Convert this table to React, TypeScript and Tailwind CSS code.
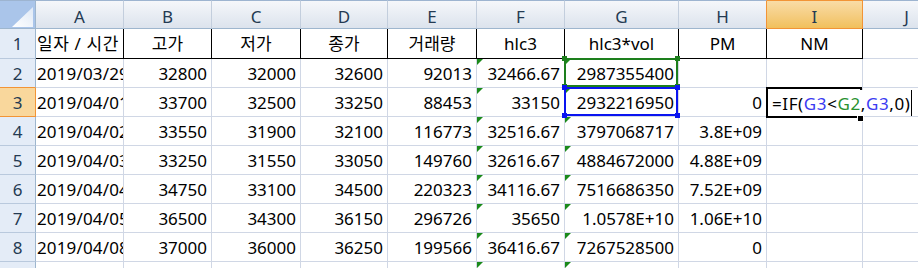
import React from "react";

const cols = ["A", "B", "C", "D", "E", "F", "G", "H", "I", "J"];

const titles = ["일자 / 시간", "고가", "저가", "종가", "거래량", "hlc3", "hlc3*vol", "PM", "NM", ""];

const rows = [
  ["2019/03/29", "32800", "32000", "32600", "92013", "32466.67", "2987355400", "", "", ""],
  ["2019/04/01", "33700", "32500", "33250", "88453", "33150", "2932216950", "0", "", ""],
  ["2019/04/02", "33550", "31900", "32100", "116773", "32516.67", "3797068717", "3.8E+09", "", ""],
  ["2019/04/03", "33250", "31550", "33050", "149760", "32616.67", "4884672000", "4.88E+09", "", ""],
  ["2019/04/04", "34750", "33100", "34500", "220323", "34116.67", "7516686350", "7.52E+09", "", ""],
  ["2019/04/05", "36500", "34300", "36150", "296726", "35650", "1.0578E+10", "1.06E+10", "", ""],
  ["2019/04/08", "37000", "36000", "36250", "199566", "36416.67", "7267528500", "0", "", ""],
  ["", "", "", "", "", "", "", "", "", ""],
];

const Flag = () => (
  <svg className="absolute left-0 top-0" width="6" height="6" viewBox="0 0 6 6">
    <polygon points="0,0 6,0 0,6" fill="#1b8a1b" />
  </svg>
);

const RangeBox = ({ color }: { color: string }) => (
  <div className="absolute -left-px -top-px right-0 bottom-0 z-10 pointer-events-none">
    <div className="absolute inset-0 border-2" style={{ borderColor: color }} />
    <div className="absolute -left-[2px] -top-[2px] w-[5px] h-[5px]" style={{ background: color }} />
    <div className="absolute -right-[2px] -top-[2px] w-[5px] h-[5px]" style={{ background: color }} />
    <div className="absolute -left-[2px] -bottom-[2px] w-[5px] h-[5px]" style={{ background: color }} />
    <div className="absolute -right-[2px] -bottom-[2px] w-[5px] h-[5px]" style={{ background: color }} />
  </div>
);

export default function App() {
  return (
    <div className="w-[918px] h-[268px] overflow-hidden bg-white font-['Noto_Sans','Noto_Sans_CJK_KR',sans-serif] text-[17px] leading-none text-black">
      <div className="grid grid-cols-[36px_88px_88px_89px_87px_89px_88px_114px_88px_96px_88px] grid-rows-[29px_30px_29px_29px_29px_29px_29px_29px_29px_29px] w-max">
        {/* corner */}
        <div className="relative bg-[#aac5ea] border-t border-t-[#9db4d0] border-r border-b border-[#9eb6ce]">
          <svg className="absolute left-0 top-0" width="36" height="28" viewBox="0 0 36 28">
            <defs>
              <linearGradient id="tri" x1="0" y1="1" x2="1" y2="0">
                <stop offset="0" stopColor="#ffffff" />
                <stop offset="1" stopColor="#dfe9f6" />
              </linearGradient>
            </defs>
            <polygon points="12,26 33,26 33,6" fill="url(#tri)" />
          </svg>
        </div>
        {cols.map((c) => {
          const sel = c === "I";
          return (
            <div
              key={c}
              className={
                "flex items-center justify-center pt-[4px] border-t border-b text-[#243a52] " +
                (sel
                  ? "bg-gradient-to-b from-[#f9dca6] to-[#f1c05c] border-t-[#f29436] border-b-[#f29436] border-r border-r-[#f29436]"
                  : c === "H"
                  ? "bg-gradient-to-b from-[#f5f7fa] to-[#dce3ed] border-t-[#9db4d0] border-b-[#9eb6ce] border-r border-r-[#f29436]"
                  : "bg-gradient-to-b from-[#f5f7fa] to-[#dce3ed] border-t-[#9db4d0] border-b-[#9eb6ce] border-r border-r-[#c3cedd]")
              }
            >
              {c}
            </div>
          );
        })}

        {/* row 1 titles */}
        <div className="flex items-center justify-center bg-[#e4ecf7] border-r border-b border-r-[#9eb6ce] border-b-[#b9c9dd] text-[#243a52]">
          1
        </div>
        {titles.map((t, i) => (
          <div
            key={i}
            className={
              "flex items-center overflow-hidden whitespace-nowrap border-r border-b " +
              (i === 0 ? "justify-start pl-[1px] tracking-[0.6px] " : "justify-center ") +
              (i < 9 ? "border-black" : "border-[#d0d7e5]")
            }
          >
            {t}
          </div>
        ))}

        {rows.map((r, ri) => {
          const n = ri + 2;
          const selRow = n === 3;
          return (
            <React.Fragment key={n}>
              <div
                className={
                  "flex items-center justify-center border-r border-b " +
                  (selRow
                    ? "bg-[#f9d79c] border-[#f29436] text-[#243a52]"
                    : n === 2
                    ? "bg-[#e4ecf7] border-r-[#9eb6ce] border-b-[#f29436] text-[#243a52]"
                    : "bg-[#e4ecf7] border-r-[#9eb6ce] border-b-[#b9c9dd] text-[#243a52]")
                }
              >
                {n}
              </div>
              {r.map((v, ci) => (
                <div
                  key={ci}
                  className={
                    "relative flex items-center whitespace-nowrap border-r border-b border-[#d0d7e5] " +
                    (ci === 0 ? "justify-start pl-[1px] overflow-hidden tracking-[0.15px]" : "justify-end pr-[4px]")
                  }
                >
                  {(ci === 5 || ci === 6) && <Flag />}
                  {v}
                  {n === 2 && ci === 6 && <RangeBox color="#1d7f1d" />}
                  {n === 3 && ci === 6 && <RangeBox color="#0a14f0" />}
                  {n === 3 && ci === 8 && (
                    <div className="absolute -left-px -top-px z-20 h-[31px] flex items-center">
                      <div className="absolute left-0 top-0 w-[96px] h-[31px] border-2 border-black" />
                      <div className="absolute left-[91px] top-[28px] w-[7px] h-[7px] bg-white" />
                      <div className="absolute left-[92px] top-[29px] w-[5px] h-[5px] bg-black" />
                      <div className="relative ml-[6px] mt-[1px] flex items-center bg-white whitespace-nowrap tracking-[0.6px]">
                        <span>=IF(</span>
                        <span className="text-[#3b3bf2]">G3</span>
                        <span>&lt;</span>
                        <span className="text-[#2a9130]">G2</span>
                        <span>,</span>
                        <span className="text-[#3b3bf2]">G3</span>
                        <span>,0)</span>
                        <span className="ml-[1px] w-px h-[26px] bg-black" />
                      </div>
                    </div>
                  )}
                </div>
              ))}
            </React.Fragment>
          );
        })}
      </div>
    </div>
  );
}
